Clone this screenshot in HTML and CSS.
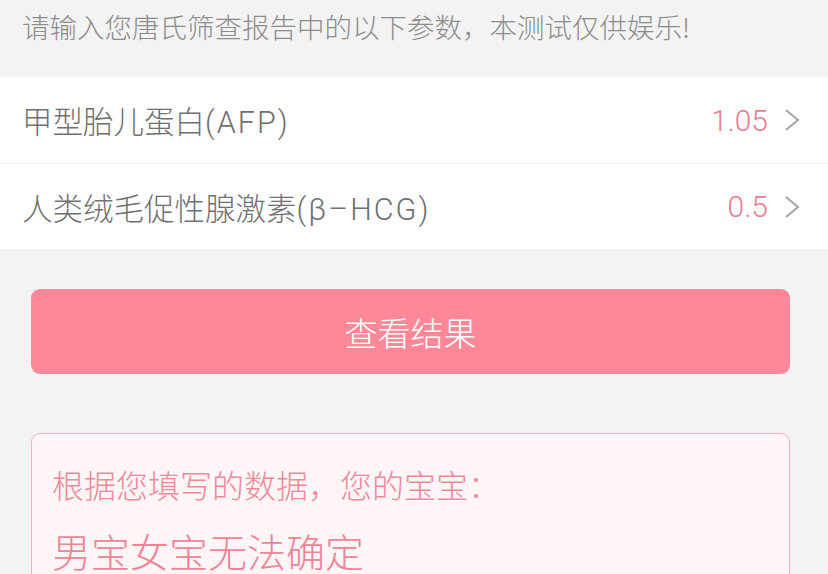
FILE: index.html
```html
<!DOCTYPE html>
<html lang="zh">
<head>
<meta charset="utf-8">
<link rel="stylesheet" href="styles.css">
</head>
<body>
<div class="notice">请输入您唐氏筛查报告中的以下参数，本测试仅供娱乐!</div>
<div class="list">
  <div class="row">
    <span class="label">甲型胎儿蛋白<span class="latin">(AFP)</span></span>
    <span class="right"><span class="value">1.05</span><svg class="chev" width="16" height="24" viewBox="0 0 16 24"><polyline points="2,2 14,12 2,22" fill="none" stroke="#a3a3a3" stroke-width="2"/></svg></span>
  </div>
  <div class="row">
    <span class="label">人类绒毛促性腺激素<span class="latin">(β–HCG)</span></span>
    <span class="right"><span class="value">0.5</span><svg class="chev" width="16" height="24" viewBox="0 0 16 24"><polyline points="2,2 14,12 2,22" fill="none" stroke="#a3a3a3" stroke-width="2"/></svg></span>
  </div>
</div>
<div class="btn">查看结果</div>
<div class="result">
  <div class="result-intro">根据您填写的数据，您的宝宝：</div>
  <div class="result-main">男宝女宝无法确定</div>
</div>
</body>
</html>
```
FILE: styles.css
```css
html, body {
  margin: 0;
  padding: 0;
}
body {
  background: #f4f3f4;
  font-family: "Noto Sans CJK SC", "Noto Sans", sans-serif;
  font-weight: 300;
  width: 828px;
  height: 574px;
  overflow: hidden;
}
.notice {
  height: 77px;
  box-sizing: border-box;
  padding: 6px 0 0 22px;
  font-size: 27.5px;
  line-height: 40px;
  color: #8c8c8c;
  white-space: nowrap;
}
.list {
  background: #ffffff;
}
.row {
  height: 86px;
  box-sizing: border-box;
  display: flex;
  align-items: center;
  justify-content: space-between;
  padding: 0 28px 0 22px;
}
.row + .row {
  border-top: 1px solid #efefef;
}
.label {
  font-family: Roboto, "Noto Sans CJK SC", sans-serif;
  font-size: 30.5px;
  color: #707070;
}
.latin {
  letter-spacing: 2px;
}
.right {
  display: flex;
  align-items: center;
}
.value {
  font-family: Roboto, "Noto Sans CJK SC", sans-serif;
  font-size: 30px;
  color: #ea7d8f;
}
.chev {
  margin-left: 16px;
  display: block;
}
.btn {
  margin: 40px 38px 0 31px;
  height: 85px;
  border-radius: 9px;
  background: #fe8898;
  color: #ffffff;
  font-size: 33px;
  display: flex;
  align-items: center;
  justify-content: center;
}
.result {
  margin: 59px 38px 0 31px;
  background: #fdf5f6;
  border: 1px solid #f0b4bd;
  border-radius: 9px;
  padding: 28px 20px 20px 20px;
  color: #ee8a9a;
}
.result-intro {
  font-size: 32px;
  line-height: 44px;
}
.result-main {
  margin-top: 19px;
  font-size: 39px;
  line-height: 50px;
  color: #ec8596;
}
```
